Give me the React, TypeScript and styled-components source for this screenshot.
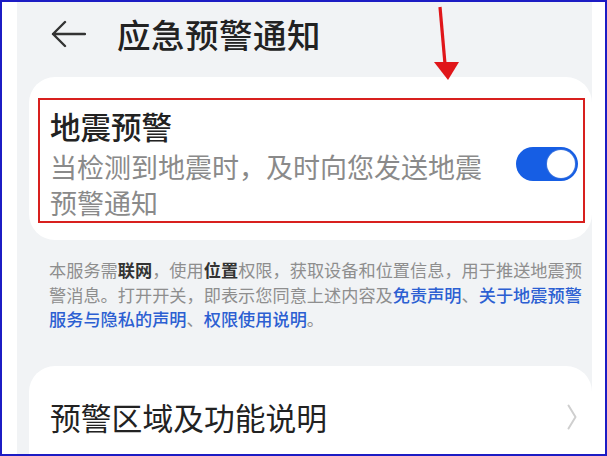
import styled, { createGlobalStyle } from "styled-components";

const GlobalStyle = createGlobalStyle`
  html, body {
    margin: 0;
    padding: 0;
    background: #ffffff;
  }
  body {
    font-family: "Noto Sans CJK SC", "Noto Sans", sans-serif;
  }
`;

const Frame = styled.div`
  position: relative;
  box-sizing: border-box;
  width: 607px;
  height: 456px;
  border: 2px solid #1c1cc4;
  background: #ffffff;
  padding: 0 13px 0 15px;
  display: flex;
  overflow: hidden;
`;

const Screen = styled.div`
  flex: 1;
  background: #f1f3f5;
  display: flex;
  flex-direction: column;
  padding-left: 12px;
  overflow: hidden;
`;

const Header = styled.div`
  display: flex;
  align-items: center;
  height: 44px;
  margin-top: 10px;
  margin-bottom: 21px;
  padding-left: 21px;
  gap: 31px;
`;

const BackIcon = styled.svg`
  width: 36px;
  height: 28px;
  flex: none;
`;

const PageTitle = styled.div`
  font-size: 33.5px;
  line-height: 44px;
  font-weight: 500;
  color: #222222;
  letter-spacing: 0.5px;
`;

const Card = styled.div<{ $top?: boolean }>`
  background: #ffffff;
  border-radius: ${(p) => (p.$top ? "26px 26px 0 0" : "26px")};
`;

const AlertCard = styled(Card)`
  padding: 21px 7px 17px 9px;
`;

const Highlight = styled.div`
  border: 2px solid #d8201e;
  display: flex;
  align-items: center;
  padding: 7px 5px 0 10px;
`;

const TextCol = styled.div`
  flex: 1;
`;

const ItemTitle = styled.div`
  font-size: 30.5px;
  line-height: 38px;
  font-weight: 500;
  color: #222222;
`;

const ItemDesc = styled.div`
  margin-top: 4px;
  font-size: 27px;
  line-height: 36px;
  color: #8a8a8a;
`;

const Toggle = styled.div<{ $on: boolean }>`
  flex: none;
  width: 62px;
  height: 34px;
  border-radius: 17px;
  background: ${(p) => (p.$on ? "#165ee4" : "#d0d0d0")};
  display: flex;
  align-items: center;
  justify-content: ${(p) => (p.$on ? "flex-end" : "flex-start")};
  padding: 0 3px;
  box-sizing: border-box;
`;

const Knob = styled.div`
  width: 28px;
  height: 28px;
  border-radius: 50%;
  background: #ffffff;
  box-shadow: 0 0 0 1px #3b74de;
`;

const Notice = styled.div`
  padding: 18px 0 34px 20px;
  font-size: 17.2px;
  line-height: 24.5px;
  color: #8e8e8e;
  white-space: nowrap;
`;

const Strong = styled.span`
  color: #333333;
  font-weight: 700;
`;

const LinkText = styled.span`
  color: #2c5fd2;
  font-weight: 500;
`;

const RowCard = styled(Card)`
  display: flex;
  align-items: center;
  justify-content: space-between;
  padding: 32px 15px 30px 21px;
`;

const RowLabel = styled.div`
  font-size: 30.8px;
  line-height: 38px;
  color: #222222;
`;

const Chevron = styled.svg`
  width: 10px;
  height: 26px;
`;

const RedArrow = styled.svg`
  position: absolute;
  left: 428px;
  top: 0;
  width: 34px;
  height: 82px;
`;

export default function App() {
  return (
    <>
      <GlobalStyle />
      <Frame>
        <Screen>
          <Header>
            <BackIcon viewBox="0 0 36 28">
              <path
                d="M35 14 H3 M15 2 L3 14 L15 26"
                fill="none"
                stroke="#333333"
                strokeWidth="2.4"
                strokeLinecap="round"
                strokeLinejoin="round"
              />
            </BackIcon>
            <PageTitle>应急预警通知</PageTitle>
          </Header>

          <AlertCard>
            <Highlight>
              <TextCol>
                <ItemTitle>地震预警</ItemTitle>
                <ItemDesc>
                  当检测到地震时，及时向您发送地震
                  <br />
                  预警通知
                </ItemDesc>
              </TextCol>
              <Toggle $on>
                <Knob />
              </Toggle>
            </Highlight>
          </AlertCard>

          <Notice>
            本服务需<Strong>联网</Strong>，使用<Strong>位置</Strong>
            权限，获取设备和位置信息，用于推送地震预
            <br />
            警消息。打开开关，即表示您同意上述内容及
            <LinkText>免责声明</LinkText>、<LinkText>关于地震预警</LinkText>
            <br />
            <LinkText>服务与隐私的声明</LinkText>、
            <LinkText>权限使用说明</LinkText>。
          </Notice>

          <RowCard $top>
            <RowLabel>预警区域及功能说明</RowLabel>
            <Chevron viewBox="0 0 10 26">
              <path
                d="M1.5 1.5 L8.5 13 L1.5 24.5"
                fill="none"
                stroke="#cfcfcf"
                strokeWidth="2"
                strokeLinecap="round"
                strokeLinejoin="round"
              />
            </Chevron>
          </RowCard>
        </Screen>

        <RedArrow viewBox="0 0 34 82">
          <path d="M10 5 L15 62" stroke="#e0161a" strokeWidth="3.2" />
          <path d="M4 60 L29 60 L18 78 Z" fill="#e0161a" />
        </RedArrow>
      </Frame>
    </>
  );
}
